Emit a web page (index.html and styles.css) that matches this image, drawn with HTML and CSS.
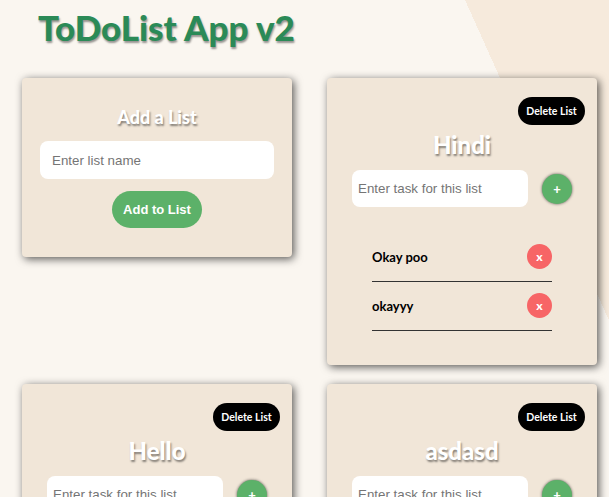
FILE: index.html
```html
<!DOCTYPE html>
<html lang="en">
<head>
<meta charset="utf-8">
<title>ToDoList App v2</title>
<link rel="stylesheet" href="styles.css">
</head>
<body>
<h1 class="title">ToDoList App v2</h1>
<main class="board">
  <section class="card add-card">
    <h2 class="add-title">Add a List</h2>
    <input class="list-input" type="text" placeholder="Enter list name">
    <button class="btn-add">Add to List</button>
  </section>

  <section class="card list-card">
    <div class="card-top"><button class="btn-delete">Delete List</button></div>
    <h2 class="list-title">Hindi</h2>
    <div class="task-form">
      <input class="task-input" type="text" placeholder="Enter task for this list">
      <button class="btn-plus">+</button>
    </div>
    <ul class="tasks">
      <li class="task"><span class="task-text">Okay poo</span><button class="btn-x">x</button></li>
      <li class="task"><span class="task-text">okayyy</span><button class="btn-x">x</button></li>
    </ul>
  </section>

  <section class="card list-card">
    <div class="card-top"><button class="btn-delete">Delete List</button></div>
    <h2 class="list-title">Hello</h2>
    <div class="task-form">
      <input class="task-input" type="text" placeholder="Enter task for this list">
      <button class="btn-plus">+</button>
    </div>
    <ul class="tasks"></ul>
  </section>

  <section class="card list-card">
    <div class="card-top"><button class="btn-delete">Delete List</button></div>
    <h2 class="list-title">asdasd</h2>
    <div class="task-form">
      <input class="task-input" type="text" placeholder="Enter task for this list">
      <button class="btn-plus">+</button>
    </div>
    <ul class="tasks"></ul>
  </section>
</main>
</body>
</html>
```

FILE: styles.css
```css
html {
  overflow: hidden;
  background: linear-gradient(65.8deg, #faf6f0 82.7%, #f6eadc 82.7%) fixed;
}

body {
  margin: 0;
  font-family: Lato, "Liberation Sans", sans-serif;
}

.title {
  margin: 5px 0 0 38px;
  font-size: 35px;
  line-height: 44px;
  font-weight: 900;
  color: #2b8a57;
  text-shadow: 1px 2px 2px rgba(0, 0, 0, 0.4);
}

.board {
  display: grid;
  grid-template-columns: 270px 270px;
  column-gap: 35px;
  row-gap: 19px;
  align-items: start;
  margin: 29px 0 0 22px;
}

.card {
  background: #f1e6d8;
  border-radius: 4px;
  box-shadow: 2px 2px 8px rgba(0, 0, 0, 0.65);
  display: flex;
  flex-direction: column;
  align-items: center;
}

.add-card {
  padding: 28px 18px 29px;
}

.add-title {
  margin: 0;
  font-size: 18px;
  line-height: 22px;
  font-weight: 900;
  color: #fff;
  text-shadow: 1px 2px 2px rgba(0, 0, 0, 0.45);
}

.list-input {
  box-sizing: border-box;
  width: 234px;
  height: 38px;
  margin-top: 13px;
  padding: 0 12px;
  border: none;
  border-radius: 8px;
  background: #fff;
  font-family: "Liberation Sans", Arial, sans-serif;
  font-size: 13.33px;
  outline: none;
}

.list-input::placeholder,
.task-input::placeholder {
  color: #757575;
}

.btn-add {
  margin-top: 12px;
  width: 90px;
  height: 37px;
  border: none;
  border-radius: 19px;
  background: #5cb169;
  color: #fff;
  font-family: "Liberation Sans", Arial, sans-serif;
  font-weight: bold;
  font-size: 13px;
  padding: 0;
}

.list-card {
  padding: 19px 12px 34px;
}

.card-top {
  align-self: stretch;
  display: flex;
  justify-content: flex-end;
}

.btn-delete {
  width: 67px;
  height: 28px;
  padding: 0;
  border: none;
  border-radius: 14px;
  background: #000;
  color: #fff;
  font-family: Lato, "Liberation Sans", sans-serif;
  font-weight: 700;
  font-size: 10.5px;
}

.list-title {
  margin: 5px 0 0;
  font-size: 24px;
  line-height: 29px;
  font-weight: 900;
  color: #fff;
  text-shadow: 1px 2px 2px rgba(0, 0, 0, 0.45);
}

.task-form {
  display: flex;
  align-items: center;
  gap: 14px;
  margin-top: 11px;
}

.task-input {
  box-sizing: border-box;
  width: 176px;
  height: 37px;
  padding: 0 6px;
  border: none;
  border-radius: 8px;
  background: #fff;
  font-family: "Liberation Sans", Arial, sans-serif;
  font-size: 13.33px;
  outline: none;
}

.btn-plus {
  width: 30px;
  height: 30px;
  padding: 0;
  border: none;
  border-radius: 50%;
  background: #5cb169;
  color: #fff;
  font-family: Lato, sans-serif;
  font-weight: 900;
  font-size: 13px;
  box-shadow: 0 0 3px rgba(0, 0, 0, 0.65);
}

.tasks {
  list-style: none;
  margin: 26px 0 0;
  padding: 0;
  width: 180px;
}

.tasks:empty {
  display: none;
}

.task {
  display: flex;
  justify-content: space-between;
  align-items: center;
  padding: 11px 0 12px;
  border-bottom: 1px solid #333;
}

.task-text {
  font-size: 13px;
  font-weight: 700;
  color: #000;
}

.btn-x {
  width: 25px;
  height: 25px;
  padding: 0;
  border: none;
  border-radius: 50%;
  background: #f76566;
  color: #fff;
  font-family: Lato, sans-serif;
  font-weight: 900;
  font-size: 12px;
}
```
